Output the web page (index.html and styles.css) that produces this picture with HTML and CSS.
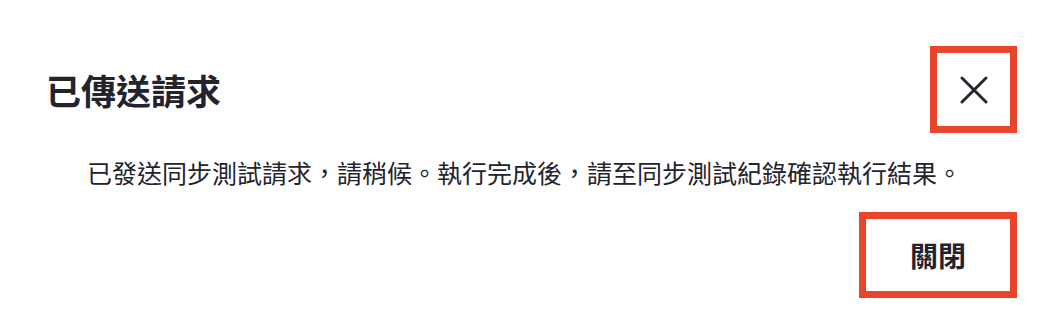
FILE: index.html
```html
<!DOCTYPE html>
<html lang="zh-Hant">
<head>
<meta charset="utf-8">
<title>已傳送請求</title>
<link rel="stylesheet" href="styles.css">
</head>
<body>
<div class="dialog">
  <div class="header">
    <h1 class="title">已傳送請求</h1>
    <button class="close" aria-label="關閉">
      <svg width="28" height="28" viewBox="0 0 28 28" fill="none" stroke="#262630" stroke-width="3" stroke-linecap="round">
        <path d="M2 2 L26 26 M26 2 L2 26"/>
      </svg>
    </button>
  </div>
  <p class="message">已發送同步測試請求，請稍候。執行完成後，請至同步測試紀錄確認執行結果。</p>
  <div class="footer">
    <button class="btn">關閉</button>
  </div>
</div>
</body>
</html>
```
FILE: styles.css
```css
html, body {
  margin: 0;
  padding: 0;
  background: #ffffff;
}
body {
  font-family: "Noto Sans CJK TC", "Noto Sans", sans-serif;
  color: #23232d;
}
.dialog {
  padding: 46px 35px 0 46px;
}
.header {
  display: flex;
  align-items: center;
  justify-content: space-between;
  height: 87px;
}
.title {
  margin: 0;
  font-size: 35px;
  font-weight: 700;
  line-height: 44px;
  color: #23232d;
}
.close {
  width: 87px;
  height: 87px;
  box-sizing: border-box;
  border: 7px solid #e8452a;
  background: #ffffff;
  padding: 0;
  display: flex;
  align-items: center;
  justify-content: center;
  cursor: pointer;
}
.message {
  margin: 22px 0 0 41px;
  font-size: 25px;
  line-height: 34px;
  font-weight: 400;
  color: #23232d;
}
.footer {
  display: flex;
  justify-content: flex-end;
  margin-top: 23px;
}
.btn {
  width: 158px;
  height: 86px;
  box-sizing: border-box;
  border: 7px solid #e8452a;
  background: #ffffff;
  font-family: "Noto Sans CJK TC", "Noto Sans", sans-serif;
  font-size: 28px;
  font-weight: 700;
  color: #23232d;
  padding: 0;
  cursor: pointer;
}
```
